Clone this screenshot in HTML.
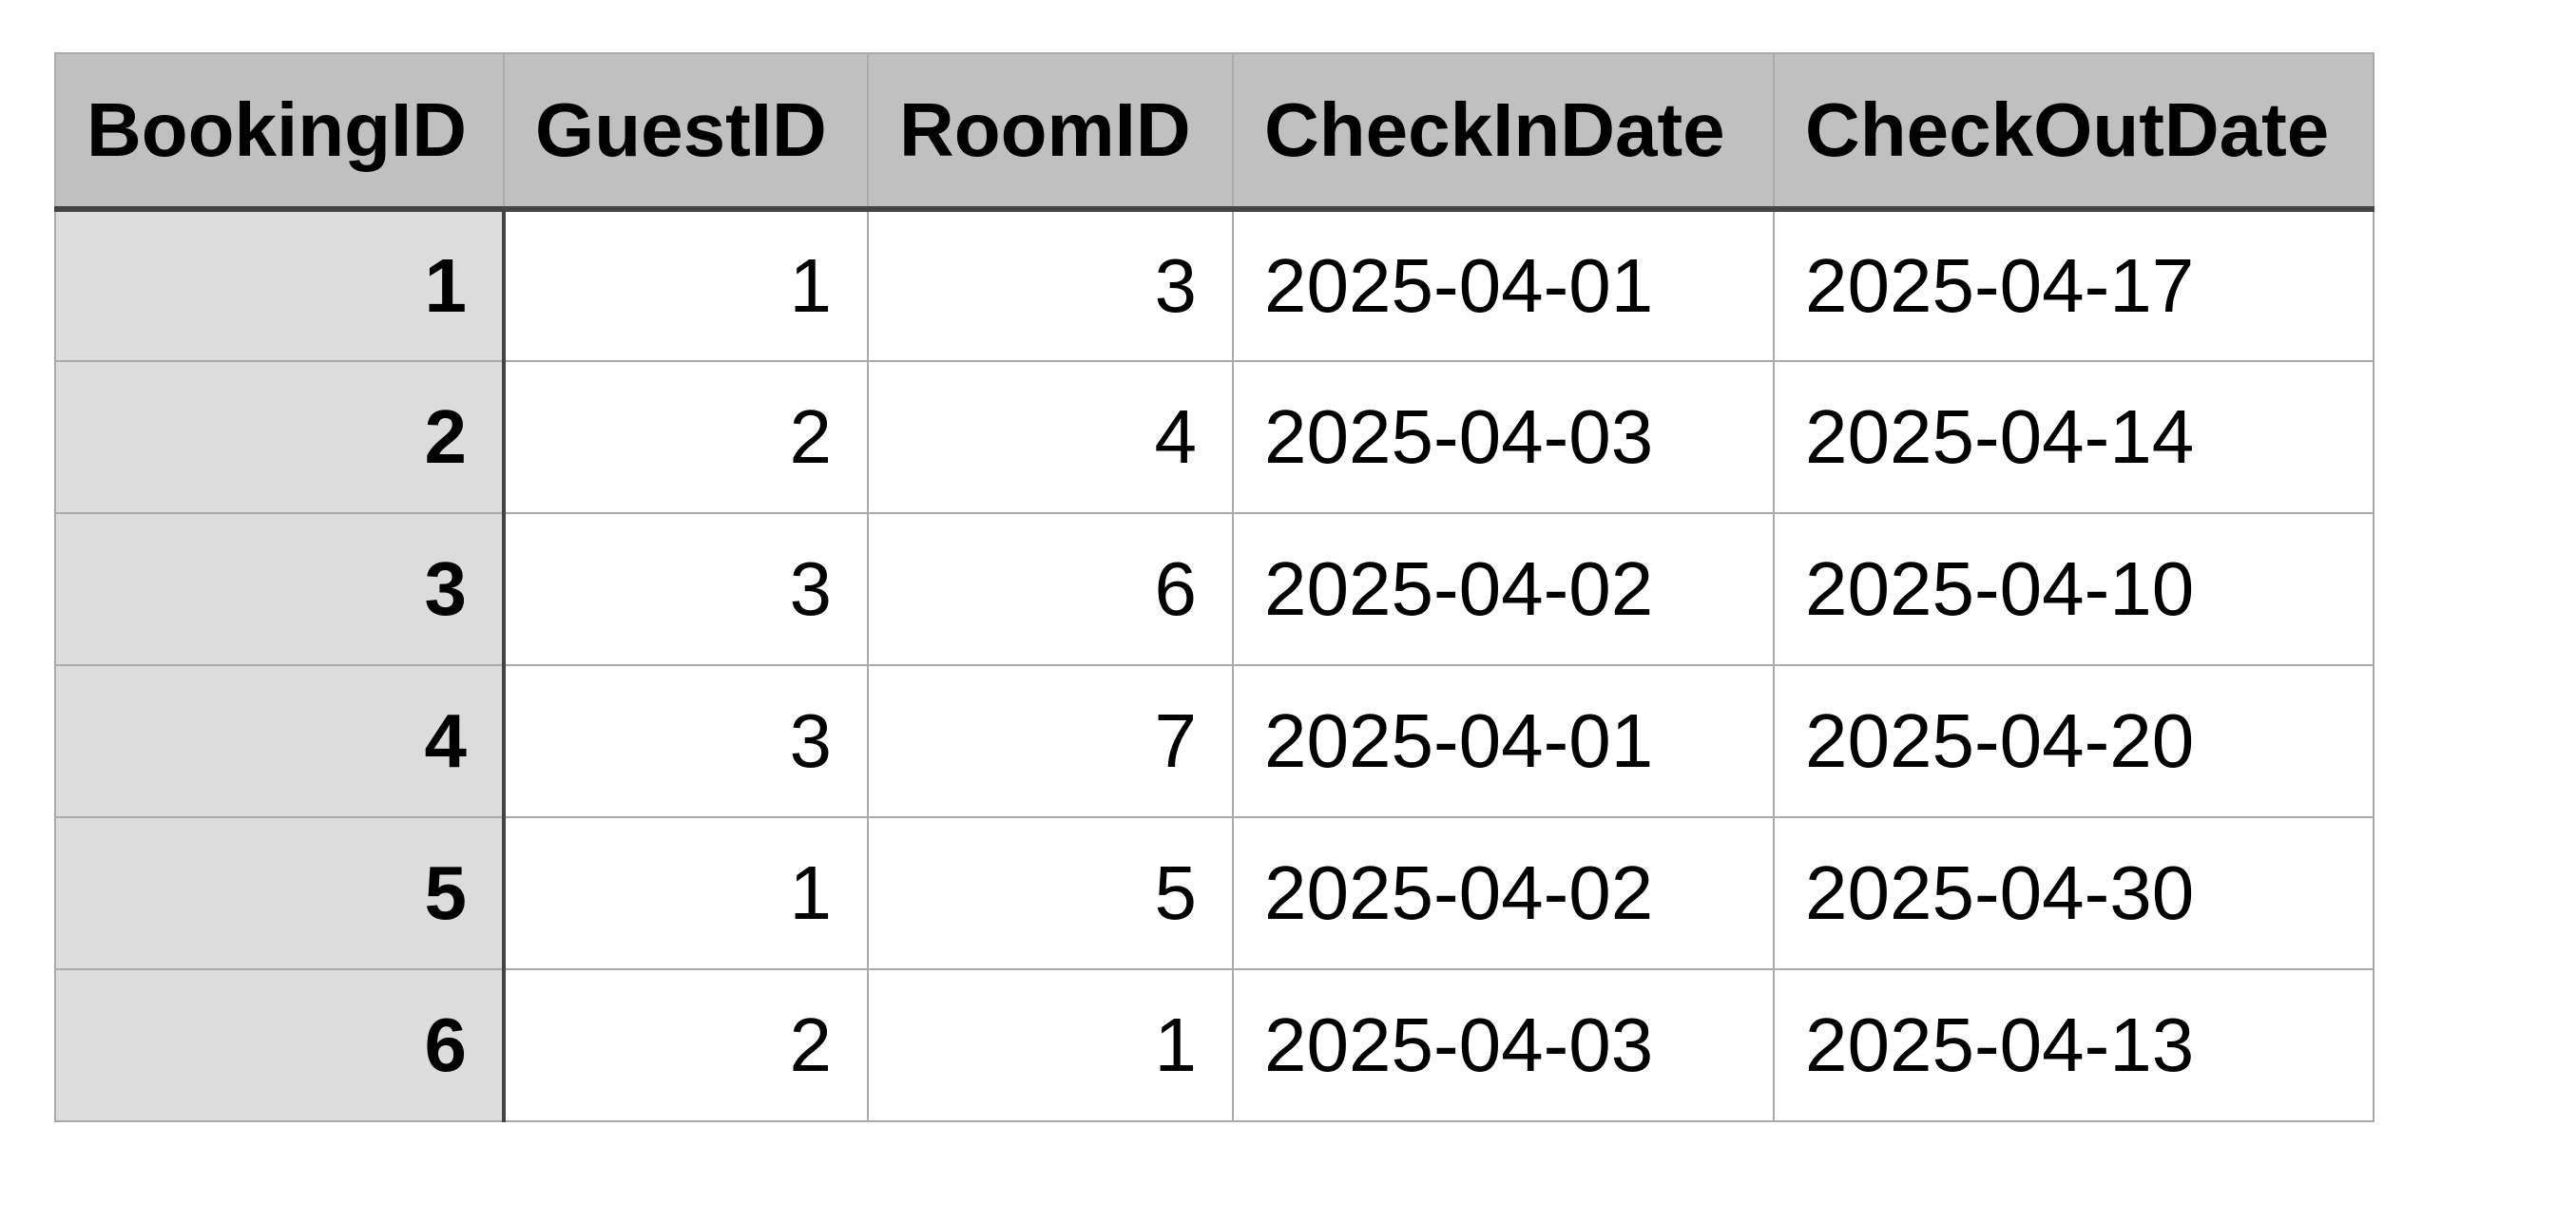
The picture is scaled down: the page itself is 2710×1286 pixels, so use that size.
<!DOCTYPE html>
<html><head><style>
html,body{margin:0;padding:0;background:#fff;width:2710px;height:1286px;overflow:hidden}
table{position:absolute;left:57px;top:55px;border-collapse:collapse;font-family:"Liberation Sans",Arial,sans-serif;font-size:80px;color:#000}
td,th{border:2px solid #aaa;padding:0 37px 0 32px;height:160px;box-sizing:border-box;line-height:1;white-space:nowrap}
th{background:#bfc0bf;font-weight:bold;text-align:left;height:164px;border-bottom:6px solid #444}
td.n{text-align:right}
td.f{background:#dcdcdc;font-weight:bold;text-align:right;border-right:4px solid #444}
th.f{border-right:2px solid #aaa}
</style></head><body>
<table>
<colgroup><col style="width:472px"><col style="width:383px"><col style="width:384px"><col style="width:569px"><col style="width:631px"></colgroup>
<tr><th class="f">BookingID</th><th>GuestID</th><th>RoomID</th><th>CheckInDate</th><th>CheckOutDate</th></tr>
<tr><td class="f">1</td><td class="n">1</td><td class="n">3</td><td>2025-04-01</td><td>2025-04-17</td></tr>
<tr><td class="f">2</td><td class="n">2</td><td class="n">4</td><td>2025-04-03</td><td>2025-04-14</td></tr>
<tr><td class="f">3</td><td class="n">3</td><td class="n">6</td><td>2025-04-02</td><td>2025-04-10</td></tr>
<tr><td class="f">4</td><td class="n">3</td><td class="n">7</td><td>2025-04-01</td><td>2025-04-20</td></tr>
<tr><td class="f">5</td><td class="n">1</td><td class="n">5</td><td>2025-04-02</td><td>2025-04-30</td></tr>
<tr><td class="f">6</td><td class="n">2</td><td class="n">1</td><td>2025-04-03</td><td>2025-04-13</td></tr>
</table>
</body></html>
